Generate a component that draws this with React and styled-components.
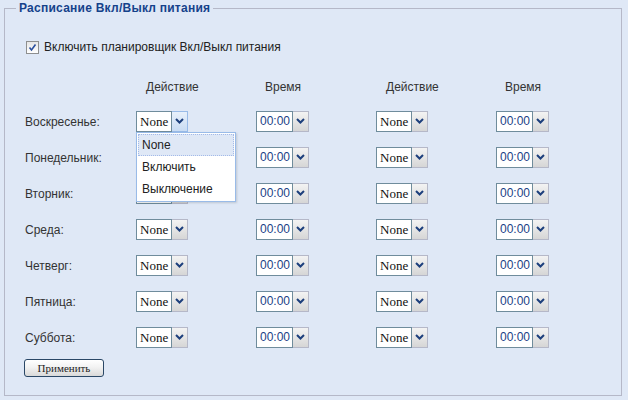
import React from 'react'
import styled, { createGlobalStyle } from 'styled-components'

const GlobalStyle = createGlobalStyle`
  html, body {
    margin: 0;
    padding: 0;
    background: #dfe8f6;
    font-family: "Liberation Sans", Arial, sans-serif;
    font-size: 12px;
    color: #222;
  }
`

const days = ['Воскресенье:', 'Понедельник:', 'Вторник:', 'Среда:', 'Четверг:', 'Пятница:', 'Суббота:']
const headers = ['Действие', 'Время', 'Действие', 'Время']

const Chevron = () => (
  <svg width="9" height="6" viewBox="0 0 9 6">
    <path d="M1 1 L4.5 4.5 L8 1" fill="none" stroke="#1d3f7c" strokeWidth="2" />
  </svg>
)

const Combo = ({ value, width, time, open }) => (
  <ComboWrap>
    <ComboInput width={width} time={time}>{value}</ComboInput>
    <Trigger active={open}><Chevron /></Trigger>
    {open && (
      <List>
        <Item selected>None</Item>
        <Item>Включить</Item>
        <Item>Выключение</Item>
      </List>
    )}
  </ComboWrap>
)

const App = () => {
  return (
    <>
      <GlobalStyle />
      <Fieldset>
        <Legend>Расписание Вкл/Выкл питания</Legend>
        <Inner>
          <CheckRow>
            <CheckBox>
              <svg width="9" height="9" viewBox="0 0 9 9">
                <path d="M1.5 4.5 L3.5 7 L7.5 1.5" fill="none" stroke="#2a4f9e" strokeWidth="1.6" />
              </svg>
            </CheckBox>
            Включить планировщик Вкл/Выкл питания
          </CheckRow>
          <Grid>
            <span />
            {headers.map((h, i) => (
              <Header key={i} shift={i % 2 ? 9 : 10}>{h}</Header>
            ))}
            {days.map((d, r) => (
              <React.Fragment key={d}>
                <DayLabel>{d}</DayLabel>
                <Cell><Combo value="None" width={36} open={r === 0} /></Cell>
                <Cell><Combo value="00:00" width={37} time /></Cell>
                <Cell><Combo value="None" width={36} /></Cell>
                <Cell><Combo value="00:00" width={37} time /></Cell>
              </React.Fragment>
            ))}
          </Grid>
          <ApplyButton>Применить</ApplyButton>
        </Inner>
      </Fieldset>
    </>
  )
}

const Fieldset = styled.fieldset`
  margin: 0 6px 0 4px;
  padding: 23px 10px 18px 10px;
  border: 1px solid #b5b8c8;
  min-width: 0;
`
const Legend = styled.legend`
  padding: 0 3px;
  margin-left: 1px;
  font-weight: bold;
  font-size: 12px;
  letter-spacing: 0.25px;
  line-height: 16px;
  color: #15428b;
`
const Inner = styled.div`
  padding-left: 10px;
`
const CheckRow = styled.label`
  display: flex;
  align-items: center;
  gap: 5px;
  height: 16px;
  margin-left: 1px;
  color: #222;
`
const CheckBox = styled.span`
  display: flex;
  align-items: center;
  justify-content: center;
  width: 11px;
  height: 11px;
  border: 1px solid #8e8f8f;
  background: linear-gradient(#e6e6e6, #ffffff);
`
const Grid = styled.div`
  display: grid;
  grid-template-columns: 111px repeat(4, 120px);
  grid-template-rows: 26px;
  grid-auto-rows: 36px;
  margin-top: 22px;
`
const Header = styled.div`
  padding-left: ${p => p.shift}px;
  line-height: 20px;
  color: #333;
`
const DayLabel = styled.div`
  display: flex;
  align-items: center;
  padding-top: 1px;
  color: #333;
`
const Cell = styled.div`
  display: flex;
  align-items: center;
`
const ComboWrap = styled.div`
  position: relative;
  display: flex;
  height: 21px;
`
const ComboInput = styled.div`
  box-sizing: border-box;
  width: ${p => p.width}px;
  height: 21px;
  border: 1px solid #6f8c9c;
  background: #fff;
  padding-left: 3px;
  line-height: 19px;
  font-family: ${p => (p.time ? '"Liberation Sans", Arial, sans-serif' : '"Liberation Serif", "Times New Roman", serif')};
  font-size: ${p => (p.time ? '12px' : '13px')};
  color: ${p => (p.time ? '#1b3f86' : '#111')};
  white-space: nowrap;
  overflow: hidden;
`
const Trigger = styled.div`
  box-sizing: border-box;
  width: 16px;
  height: 21px;
  display: flex;
  align-items: center;
  justify-content: center;
  border: 1px solid ${p => (p.active ? '#99bbe8' : '#b5b8c8')};
  border-left: none;
  background: ${p => (p.active ? 'linear-gradient(#e7f0fb, #c9dcf3)' : 'linear-gradient(#f3f3f3, #d6d6d6)')};
`
const List = styled.div`
  position: absolute;
  top: 21px;
  left: 0;
  z-index: 10;
  box-sizing: border-box;
  width: 100px;
  padding: 1px;
  border: 1px solid #99bbe8;
  background: #fff;
  box-shadow: 1px 1px 2px rgba(0, 0, 0, 0.15);
`
const Item = styled.div`
  box-sizing: border-box;
  height: 22px;
  line-height: 20px;
  padding-left: 3px;
  font-size: 12px;
  color: #222;
  border: 1px dotted ${p => (p.selected ? '#a3bae9' : 'transparent')};
  background: ${p => (p.selected ? '#dfe8f6' : '#fff')};
`
const ApplyButton = styled.button`
  display: block;
  margin-top: 4px;
  margin-left: -1px;
  width: 80px;
  height: 18px;
  padding: 0;
  border: 1px solid #2a4766;
  border-radius: 3px;
  background: linear-gradient(#ffffff 0%, #f2f2f2 45%, #d9d9d9 100%);
  font-family: "Liberation Serif", "Times New Roman", serif;
  font-size: 11px;
  color: #222;
`

export default App
